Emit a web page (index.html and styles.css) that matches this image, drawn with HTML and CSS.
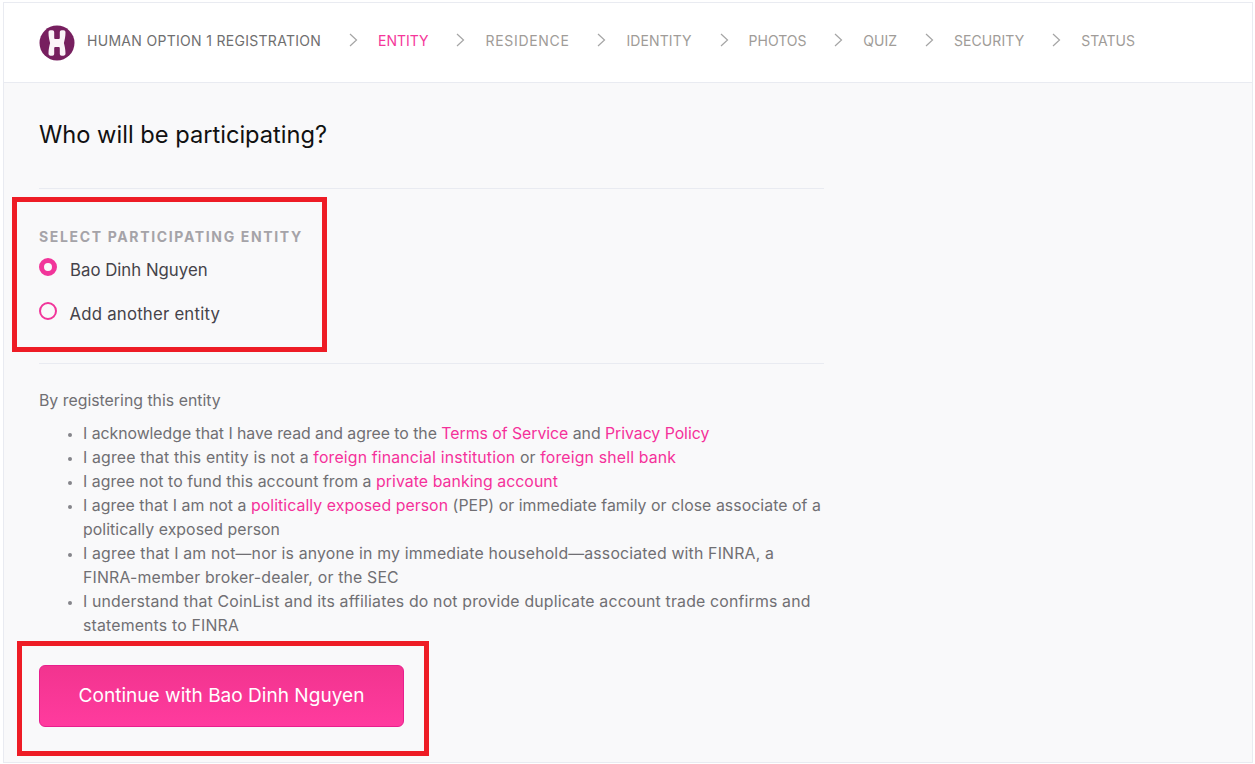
FILE: index.html
```html
<!DOCTYPE html>
<html lang="en">
<head>
<meta charset="utf-8">
<title>Human Option 1 Registration</title>
<link rel="stylesheet" href="styles.css">
</head>
<body>
<div class="frame">
  <header class="topbar">
    <svg class="logo" viewBox="0 0 36 36" width="36" height="36" aria-hidden="true">
      <circle cx="18" cy="18" r="17.5" fill="#771f5f"/>
      <path d="M9.500 7.500c0-1.300.8-2.200 2-2.200h1.800c1.200 0 1.900.8 1.900 2v5.500c0 .8.500 1.200 1.200 1.200h3.200c.7 0 1.200-.4 1.200-1.200V7.300c0-1.200.7-2 1.900-2h1.800c1.200 0 2 .9 2 2.200 0 4.200-.9 7.800-1.600 10.500.7 2.700 1.600 6.300 1.600 10.500 0 1.300-.8 2.200-2 2.200h-1.800c-1.200 0-1.900-.8-1.900-2v-5.500c0-.8-.5-1.200-1.200-1.200h-3.200c-.7 0-1.200.4-1.200 1.200v5.500c0 1.200-.7 2-1.900 2h-1.800c-1.200 0-2-.9-2-2.200 0-4.200.9-7.800 1.600-10.500-.7-2.700-1.600-6.300-1.600-10.500z" fill="#fbf3f8"/>
    </svg>
    <span class="crumb crumb-title">HUMAN OPTION 1 REGISTRATION</span>
    <svg class="chev" viewBox="0 0 9 14" width="9" height="14" aria-hidden="true"><path d="M1 1l6.500 6L1 13" fill="none" stroke="#a5a5a5" stroke-width="1.200"/></svg>
    <span class="crumb crumb-active">ENTITY</span>
    <svg class="chev" viewBox="0 0 9 14" width="9" height="14" aria-hidden="true"><path d="M1 1l6.500 6L1 13" fill="none" stroke="#a5a5a5" stroke-width="1.200"/></svg>
    <span class="crumb crumb-wide">RESIDENCE</span>
    <svg class="chev" viewBox="0 0 9 14" width="9" height="14" aria-hidden="true"><path d="M1 1l6.500 6L1 13" fill="none" stroke="#a5a5a5" stroke-width="1.200"/></svg>
    <span class="crumb crumb-fine">IDENTITY</span>
    <svg class="chev" viewBox="0 0 9 14" width="9" height="14" aria-hidden="true"><path d="M1 1l6.500 6L1 13" fill="none" stroke="#a5a5a5" stroke-width="1.200"/></svg>
    <span class="crumb">PHOTOS</span>
    <svg class="chev" viewBox="0 0 9 14" width="9" height="14" aria-hidden="true"><path d="M1 1l6.500 6L1 13" fill="none" stroke="#a5a5a5" stroke-width="1.200"/></svg>
    <span class="crumb">QUIZ</span>
    <svg class="chev" viewBox="0 0 9 14" width="9" height="14" aria-hidden="true"><path d="M1 1l6.500 6L1 13" fill="none" stroke="#a5a5a5" stroke-width="1.200"/></svg>
    <span class="crumb crumb-fine">SECURITY</span>
    <svg class="chev" viewBox="0 0 9 14" width="9" height="14" aria-hidden="true"><path d="M1 1l6.500 6L1 13" fill="none" stroke="#a5a5a5" stroke-width="1.200"/></svg>
    <span class="crumb">STATUS</span>
  </header>
  <main class="content">
    <h1 class="title">Who will be participating?</h1>
    <section class="entity">
      <h2 class="label">SELECT PARTICIPATING ENTITY</h2>
      <div class="option"><span class="radio radio-on"></span><span>Bao Dinh Nguyen</span></div>
      <div class="option option-add"><span class="radio"></span><span>Add another entity</span></div>
    </section>
    <section class="terms">
      <p class="intro">By registering this entity</p>
      <ul class="list">
        <li class="tight">I acknowledge that I have read and agree to the <a href="#">Terms of Service</a> and <a href="#">Privacy Policy</a></li>
        <li class="wide">I agree that this entity is not a <a href="#">foreign financial institution</a> or <a href="#">foreign shell bank</a></li>
        <li>I agree not to fund this account from a <a href="#">private banking account</a></li>
        <li>I agree that I am not a <a href="#">politically exposed person</a> (PEP) or immediate family or close associate of a politically exposed person</li>
        <li class="mid">I agree that I am not—nor is anyone in my immediate household—associated with FINRA, a <span class="nb">FINRA-member</span> broker-dealer, or the SEC</li>
        <li class="mid">I understand that CoinList and its affiliates do not provide duplicate account trade confirms and statements to FINRA</li>
      </ul>
    </section>
    <button class="cta" type="button">Continue with Bao Dinh Nguyen</button>
  </main>
  <div class="mark mark-entity"></div>
  <div class="mark mark-cta"></div>
</div>
</body>
</html>
```
FILE: styles.css
```css
* { box-sizing: border-box; }
html, body { margin: 0; height: 100%; background: #fff; }
body { padding: 2px 2px 1px 3px; font-family: "Inter", "Liberation Sans", sans-serif; overflow: hidden; }
.frame { height: 761px; border: 1px solid #e9ebf1; background: #f9f9fa; display: flex; flex-direction: column; position: relative; }
.topbar { height: 80px; flex: none; background: #fff; border-bottom: 1px solid #e9ebf1; display: flex; align-items: center; padding: 0 0 5px 35px; }
.logo { flex: none; margin: 5px 12px 0 0; }
.crumb { font-size: 14px; color: #a09c98; white-space: nowrap; }
.crumb-title { color: #6f6f70; letter-spacing: .3px; }
.crumb-active { color: #f5379a; }
.crumb-wide { letter-spacing: .7px; }
.crumb-fine { letter-spacing: .1px; }
.chev { flex: none; margin: 0 20px 0 27.850px; }
.content { padding: 0 0 0 35px; width: 820px; flex: 1; }
.title { margin: 0; height: 106px; padding-top: 38px; font-size: 23.650px; line-height: 28px; font-weight: 400; color: #111; border-bottom: 1px solid #e9ebf1; }
.entity { height: 175px; padding-top: 40px; border-bottom: 1px solid #e9ebf1; }
.label { margin: 0 0 7px; font-size: 14px; line-height: 16px; font-weight: 700; letter-spacing: 1.650px; color: #a5a3a8; }
.option { display: flex; align-items: center; height: 44px; font-size: 16.800px; color: #45434a; margin-top: -4px; }
.option + .option { margin-top: 0; }
.option-add { letter-spacing: .2px; }
.radio { width: 18px; height: 18px; border-radius: 50%; border: 2px solid #f1359a; margin: -6px 13px 0 0; flex: none; }
.option-add .radio { margin-right: 12.500px; }
.radio-on { border-width: 5px; }
.terms { padding-top: 25px; font-size: 15.850px; line-height: 24px; color: #706f73; }
.intro { margin: 0 0 9px; }
.list { margin: 0; padding-left: 44px; letter-spacing: .05px; }
.list li::marker { font-size: 12px; color: #85858a; }
.list .tight { letter-spacing: -.04px; }
.list .wide { letter-spacing: .15px; }
.list .mid { letter-spacing: .17px; }
.list a { color: #f5319a; text-decoration: none; }
.nb { white-space: nowrap; }
.cta { display: block; margin-top: 27px; width: 365px; height: 62px; padding: 0 0 2px; border: 1px solid #e81f8d; border-radius: 6px; background: linear-gradient(#f2348f, #ff3b9e); color: #fff; font-family: inherit; font-size: 19.070px; font-weight: 400; }
.mark { position: absolute; border: 5px solid #ee1c25; pointer-events: none; }
.mark-entity { left: 8px; top: 194px; width: 315px; height: 155px; }
.mark-cta { left: 13px; top: 638px; width: 412px; height: 115px; }
```
